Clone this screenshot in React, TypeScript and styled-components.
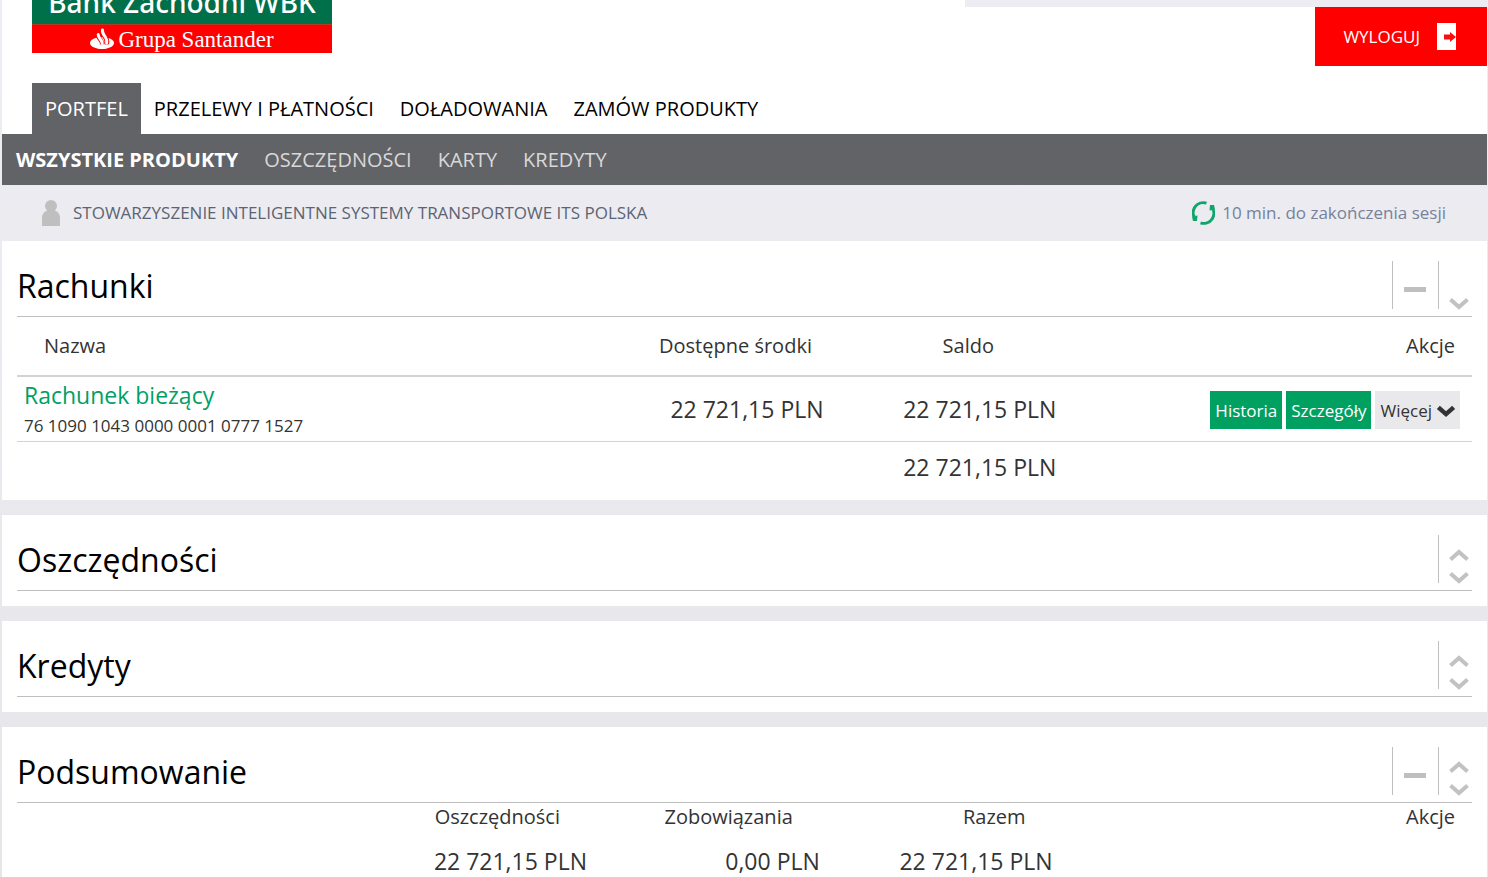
import React from "react";
import styled, { createGlobalStyle } from "styled-components";

const GlobalStyle = createGlobalStyle`
  * { box-sizing: border-box; }
  body {
    margin: 0;
    background: linear-gradient(#eeedf3, #e6e5ea);
    color: #333;
    font-family: "Open Sans", "Noto Sans", sans-serif;
    font-size: 20px;
  }
  h1, h2, p { margin: 0; font-weight: 400; }
  a { color: inherit; text-decoration: none; }
  button { font-family: inherit; border: 0; cursor: pointer; }
  svg { display: block; flex: none; }
`;

const Page = styled.div`
  display: flex;
  flex-direction: column;
  min-height: 100vh;
  padding: 0 1px 0 2px;
`;

const Header = styled.header`
  background: #fff;
`;

const HeaderTop = styled.div`
  display: flex;
  justify-content: space-between;
  height: 83px;
  padding-left: 30px;
`;

const Logo = styled.a`
  width: 300px;
  height: 53px;
  display: flex;
  flex-direction: column;
  color: #fff;
  background: #f00;
`;

const BankName = styled.span`
  display: flex;
  align-items: flex-end;
  justify-content: center;
  height: 24px;
  overflow: hidden;
  background: #00704a;
  font: 500 28px/44px "Noto Sans", sans-serif;
  white-space: nowrap;
`;

const GroupName = styled.span`
  display: flex;
  align-items: center;
  justify-content: center;
  gap: 4px;
  height: 29px;
  border-top: 1px solid #b83a25;
  font: 23px/28px "Liberation Serif", serif;
`;

const GroupText = styled.span`
  padding-top: 2px;
`;

const HeaderSide = styled.div`
  display: flex;
  flex-direction: column;
  align-items: flex-end;
  width: 522px;
  border-top: 7px solid #edecf2;
`;

const Logout = styled.button`
  display: flex;
  align-items: center;
  gap: 17px;
  height: 59px;
  padding: 0 31px 0 28px;
  background: #f00;
  color: #fff;
  font-size: 17px;
`;

const Tabs = styled.nav`
  display: flex;
  height: 51px;
  padding-left: 30px;
`;

const Tab = styled.a<{ $active?: boolean }>`
  padding: 0 13px;
  line-height: 51px;
  background: ${(p) => (p.$active ? "#626366" : "transparent")};
  && { color: ${(p) => (p.$active ? "#fff" : "#000")}; }
`;

const SubNav = styled.nav`
  display: flex;
  height: 51px;
  padding-left: 1px;
  background: #626366;
`;

const SubLink = styled.a<{ $active?: boolean }>`
  padding: 0 13px;
  line-height: 51px;
  font-weight: ${(p) => (p.$active ? 700 : 400)};
  && { color: ${(p) => (p.$active ? "#fff" : "#d8d8da")}; }
`;

const UserBar = styled.div`
  display: flex;
  align-items: center;
  justify-content: space-between;
  height: 56px;
  padding: 0 41px 0 40px;
  font-size: 17px;
  line-height: 24px;
`;

const User = styled.div`
  display: flex;
  align-items: center;
  gap: 13px;
  color: #5b6473;
`;

const Session = styled.div`
  display: flex;
  align-items: center;
  gap: 7px;
  color: #76829a;
`;

const Main = styled.main`
  flex: 1;
  display: flex;
  flex-direction: column;
  gap: 15px;
`;

const Panel = styled.section`
  padding: 20px 15px 15px;
  background: #fff;
  &:last-child { flex: 1; padding-bottom: 0; }
`;

const PanelHead = styled.div`
  display: flex;
  justify-content: space-between;
  height: 56px;
  border-bottom: 1px solid #bfbfbf;
`;

const PanelTitle = styled.h2`
  font-size: 32px;
  line-height: 50px;
  color: #000;
`;

const Controls = styled.div`
  display: flex;
  height: 48px;
`;

const ControlGroup = styled.div<{ $wide?: boolean }>`
  display: flex;
  flex-direction: column;
  justify-content: flex-end;
  align-items: center;
  gap: 10px;
  width: ${(p) => (p.$wide ? 46 : 34)}px;
  padding: ${(p) => (p.$wide ? "0 1px 17px 0" : "0 0 0 7px")};
  border-left: 1px solid #bfbfbf;
`;

const IconButton = styled.button`
  display: block;
  padding: 0;
  background: none;
`;

const Table = styled.table`
  width: 100%;
  border-collapse: separate;
  border-spacing: 0;
  table-layout: fixed;
  th, td { padding: 0; }
  th { font-weight: 400; }
`;

const Col = styled.col<{ $share: number }>`
  width: ${(p) => p.$share}%;
`;

const AccountHead = styled.th`
  height: 60px;
  border-bottom: 2px solid #d3d3d3;
  && { padding: 0 18px 2px 0; }
  &&:first-child { padding-left: 27px; text-align: left; }
  &&:last-child { padding-right: 17px; text-align: right; }
`;

const AccountCell = styled.td`
  height: 65px;
  border-bottom: 1px solid #d3d3d3;
  && { padding-top: 2px; }
  &&:first-child { padding-left: 7px; }
  &&:last-child { padding-right: 12px; }
`;

const Money = styled.td`
  && { padding-left: 5px; }
  border-bottom: 1px solid #d3d3d3;
  text-align: center;
  font-size: 23px;
`;

const TotalRow = styled.tr`
  && td { height: 43px; border: 0; padding-top: 7px; }
`;

const AccountName = styled.a`
  display: block;
  font-size: 23px;
  line-height: 32px;
  && { color: #009f66; }
`;

const AccountNumber = styled.span`
  display: block;
  font-size: 17px;
  line-height: 30px;
`;

const Actions = styled.div`
  display: flex;
  justify-content: flex-end;
  gap: 4px;
`;

const Action = styled.button<{ $muted?: boolean }>`
  display: flex;
  align-items: center;
  gap: 5px;
  height: 38px;
  padding: 0 5px;
  font-size: 17px;
  color: ${(p) => (p.$muted ? "#333" : "#fff")};
  background: ${(p) => (p.$muted ? "#e9e9eb" : "#00a061")};
`;

const SummaryHead = styled.th`
  height: 42px;
  text-align: right;
  vertical-align: top;
  line-height: 28px;
  && { padding-right: 39px; }
  &&:last-child { padding-right: 17px; }
`;

const SummaryCell = styled.td`
  height: 32px;
  text-align: right;
  font-size: 23px;
  line-height: 32px;
  && { padding-right: 12px; }
`;

const Flame = () => (
  <svg width="24" height="22" viewBox="0 0 24 22" aria-hidden="true">
    <ellipse cx="12" cy="15" rx="12" ry="6" fill="#fff" />
    <g fill="none" strokeLinecap="round">
      <path d="M12.500 2c-.5 3 1 4.500 2.800 7 1.300 1.900 2 3.500 1.400 6" stroke="#f00" strokeWidth="5" />
      <path d="M8 6.500c0 2.500 1.300 3.700 3 6 1 1.400 1.400 2.500 1 4" stroke="#f00" strokeWidth="4.500" />
      <path d="M12.500 2c-.5 3 1 4.500 2.800 7 1.300 1.900 2 3.500 1.400 6" stroke="#fff" strokeWidth="3" />
      <path d="M8.200 6.500c0 2.500 1.300 3.700 3 6 1 1.400 1.400 2.500 1 4" stroke="#fff" strokeWidth="3" />
    </g>
    <path d="M3 16.500h18c-1 3-5 4.500-9 4.500s-8-1.500-9-4.500z" fill="#fff" />
  </svg>
);

const ExitIcon = () => (
  <svg width="19" height="27" viewBox="0 0 19 27" aria-hidden="true">
    <path fill="#fff" d="M0 0h19v27H0z" />
    <path fill="#f5100f" d="M7 11.500h6V9l6 5-6 5v-2.500H7z" />
  </svg>
);

const PersonIcon = () => (
  <svg width="18" height="26" viewBox="0 0 18 26" fill="#bfbfbf" aria-hidden="true">
    <circle cx="9" cy="6" r="6" />
    <path d="M0 26v-8c0-4 2-6.500 5.500-7.500h7c3.500 1 5.500 3.500 5.500 7.500v8z" />
  </svg>
);

const RefreshIcon = () => (
  <svg width="23" height="24" viewBox="0 0 23 24" fill="none" stroke="#10a56c" strokeWidth="3" aria-hidden="true">
    <path d="M14.500 2.200A10 10 0 0 0 3.500 18" />
    <path d="M8.500 21.800A10 10 0 0 0 19.500 6" />
    <path d="M0 15.500 5.500 14.500 5 20H1zM23 8.500 17.500 9.500 18 4h4z" fill="#10a56c" stroke="none" />
  </svg>
);

const Chevron = ({ up, dark }: { up?: boolean; dark?: boolean }) => (
  <svg
    width={dark ? 18 : 20}
    height={dark ? 11 : 12}
    viewBox="0 0 20 12"
    overflow="visible"
    fill="none"
    stroke={dark ? "#333" : "#c2c2c2"}
    strokeWidth={dark ? 5 : 4}
    aria-hidden="true"
  >
    <path d={up ? "M1.500 10.500 10 3l8.500 7.500" : "M1.500 2.500 10 10l8.500-7.500"} />
  </svg>
);

const MinusIcon = () => (
  <svg width="22" height="5" viewBox="0 0 22 5" fill="#bfbfbf" aria-hidden="true">
    <path d="M0 0h22v5H0z" />
  </svg>
);

interface PanelProps {
  title: string;
  collapsible?: boolean;
  first?: boolean;
  children?: React.ReactNode;
}

const ProductPanel = ({ title, collapsible, first, children }: PanelProps) => (
  <Panel>
    <PanelHead>
      <PanelTitle>{title}</PanelTitle>
      <Controls>
        {collapsible && (
          <ControlGroup $wide>
            <IconButton aria-label={`Zwiń: ${title}`}>
              <MinusIcon />
            </IconButton>
          </ControlGroup>
        )}
        <ControlGroup>
          {!first && (
            <IconButton aria-label={`Przesuń w górę: ${title}`}>
              <Chevron up />
            </IconButton>
          )}
          <IconButton aria-label={`Przesuń w dół: ${title}`}>
            <Chevron />
          </IconButton>
        </ControlGroup>
      </Controls>
    </PanelHead>
    {children}
  </Panel>
);

const tabs = ["PORTFEL", "PRZELEWY I PŁATNOŚCI", "DOŁADOWANIA", "ZAMÓW PRODUKTY"];
const subLinks = ["WSZYSTKIE PRODUKTY", "OSZCZĘDNOŚCI", "KARTY", "KREDYTY"];

export default function App() {
  return (
    <>
      <GlobalStyle />
      <Page>
        <Header>
          <HeaderTop>
            <Logo href="#">
              <BankName>Bank Zachodni WBK</BankName>
              <GroupName>
                <Flame />
                <GroupText>Grupa Santander</GroupText>
              </GroupName>
            </Logo>
            <HeaderSide>
              <Logout>
                WYLOGUJ
                <ExitIcon />
              </Logout>
            </HeaderSide>
          </HeaderTop>
          <Tabs>
            {tabs.map((label, i) => (
              <Tab key={label} href="#" $active={i === 0}>{label}</Tab>
            ))}
          </Tabs>
          <SubNav>
            {subLinks.map((label, i) => (
              <SubLink key={label} href="#" $active={i === 0}>{label}</SubLink>
            ))}
          </SubNav>
        </Header>
        <UserBar>
          <User>
            <PersonIcon />
            STOWARZYSZENIE INTELIGENTNE SYSTEMY TRANSPORTOWE ITS POLSKA
          </User>
          <Session>
            <RefreshIcon />
            10 min. do zakończenia sesji
          </Session>
        </UserBar>
        <Main>
          <ProductPanel title="Rachunki" collapsible first>
            <Table>
              <colgroup>
                <Col $share={42} />
                <Col $share={16} />
                <Col $share={16} />
                <Col $share={26} />
              </colgroup>
              <thead>
                <tr>
                  <AccountHead>Nazwa</AccountHead>
                  <AccountHead>Dostępne środki</AccountHead>
                  <AccountHead>Saldo</AccountHead>
                  <AccountHead>Akcje</AccountHead>
                </tr>
              </thead>
              <tbody>
                <tr>
                  <AccountCell>
                    <AccountName href="#">Rachunek bieżący</AccountName>
                    <AccountNumber>76 1090 1043 0000 0001 0777 1527</AccountNumber>
                  </AccountCell>
                  <Money>22 721,15 PLN</Money>
                  <Money>22 721,15 PLN</Money>
                  <AccountCell>
                    <Actions>
                      <Action>Historia</Action>
                      <Action>Szczegóły</Action>
                      <Action $muted>
                        Więcej
                        <Chevron dark />
                      </Action>
                    </Actions>
                  </AccountCell>
                </tr>
                <TotalRow>
                  <AccountCell />
                  <Money />
                  <Money>22 721,15 PLN</Money>
                  <AccountCell />
                </TotalRow>
              </tbody>
            </Table>
          </ProductPanel>
          <ProductPanel title="Oszczędności" />
          <ProductPanel title="Kredyty" />
          <ProductPanel title="Podsumowanie" collapsible>
            <Table>
              <colgroup>
                <Col $share={40} />
                <Col $share={16} />
                <Col $share={16} />
                <Col $share={28} />
              </colgroup>
              <thead>
                <tr>
                  <SummaryHead>Oszczędności</SummaryHead>
                  <SummaryHead>Zobowiązania</SummaryHead>
                  <SummaryHead>Razem</SummaryHead>
                  <SummaryHead>Akcje</SummaryHead>
                </tr>
              </thead>
              <tbody>
                <tr>
                  <SummaryCell>22 721,15 PLN</SummaryCell>
                  <SummaryCell>0,00 PLN</SummaryCell>
                  <SummaryCell>22 721,15 PLN</SummaryCell>
                  <SummaryCell />
                </tr>
              </tbody>
            </Table>
          </ProductPanel>
        </Main>
      </Page>
    </>
  );
}
